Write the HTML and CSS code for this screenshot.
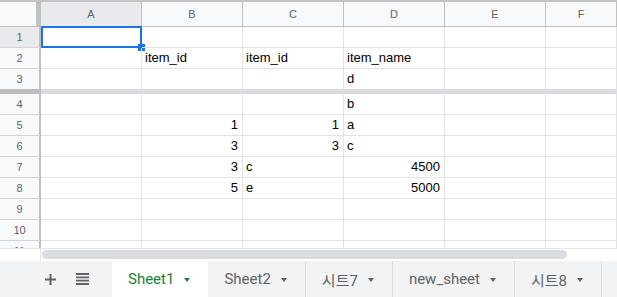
FILE: index.html
```html
<!doctype html>
<html>
<head>
    <meta charset="utf-8" />
    <title>Sheet</title>
    <link rel="stylesheet" href="styles.css">
</head>
<body>

<div class="grid">
    <div class="row head">
        <div class="corner"></div>
        <div class="col sel">A</div>
        <div class="col">B</div>
        <div class="col">C</div>
        <div class="col">D</div>
        <div class="col">E</div>
        <div class="col">F</div>
    </div>
    <div class="row">
        <div class="rh sel">1</div>
        <div class="cell active"><span class="selection"><span class="handle"></span></span></div>
        <div class="cell"></div><div class="cell"></div><div class="cell"></div><div class="cell"></div><div class="cell"></div>
    </div>
    <div class="row">
        <div class="rh">2</div>
        <div class="cell"></div>
        <div class="cell">item_id</div>
        <div class="cell">item_id</div>
        <div class="cell">item_name</div>
        <div class="cell"></div><div class="cell"></div>
    </div>
    <div class="row frozen">
        <div class="rh">3</div>
        <div class="cell"></div><div class="cell"></div><div class="cell"></div>
        <div class="cell">d</div>
        <div class="cell"></div><div class="cell"></div>
    </div>
    <div class="row">
        <div class="rh">4</div>
        <div class="cell"></div><div class="cell"></div><div class="cell"></div>
        <div class="cell">b</div>
        <div class="cell"></div><div class="cell"></div>
    </div>
    <div class="row">
        <div class="rh">5</div>
        <div class="cell"></div>
        <div class="cell num">1</div>
        <div class="cell num">1</div>
        <div class="cell">a</div>
        <div class="cell"></div><div class="cell"></div>
    </div>
    <div class="row">
        <div class="rh">6</div>
        <div class="cell"></div>
        <div class="cell num">3</div>
        <div class="cell num">3</div>
        <div class="cell">c</div>
        <div class="cell"></div><div class="cell"></div>
    </div>
    <div class="row">
        <div class="rh">7</div>
        <div class="cell"></div>
        <div class="cell num">3</div>
        <div class="cell">c</div>
        <div class="cell num">4500</div>
        <div class="cell"></div><div class="cell"></div>
    </div>
    <div class="row">
        <div class="rh">8</div>
        <div class="cell"></div>
        <div class="cell num">5</div>
        <div class="cell">e</div>
        <div class="cell num">5000</div>
        <div class="cell"></div><div class="cell"></div>
    </div>
    <div class="row">
        <div class="rh">9</div>
        <div class="cell"></div><div class="cell"></div><div class="cell"></div><div class="cell"></div><div class="cell"></div><div class="cell"></div>
    </div>
    <div class="row">
        <div class="rh">10</div>
        <div class="cell"></div><div class="cell"></div><div class="cell"></div><div class="cell"></div><div class="cell"></div><div class="cell"></div>
    </div>
    <div class="row">
        <div class="rh">11</div>
        <div class="cell"></div><div class="cell"></div><div class="cell"></div><div class="cell"></div><div class="cell"></div><div class="cell"></div>
    </div>
</div>

<div class="hscroll">
    <div class="hscroll-gap"></div>
    <div class="thumb"></div>
</div>

<div class="tabbar">
    <div class="tools">
        <svg width="11" height="11" viewBox="0 0 11 11"><path d="M5.5 0v11M0 5.5h11" stroke="#5f6368" stroke-width="2"/></svg>
        <svg width="13" height="12" viewBox="0 0 13 12"><path d="M0 1h13M0 4.3h13M0 7.7h13M0 11h13" stroke="#5f6368" stroke-width="1.8"/></svg>
    </div>
    <div class="tab current">Sheet1<span class="caret"></span></div>
    <div class="tab">Sheet2<span class="caret"></span></div>
    <div class="tab">시트7<span class="caret"></span></div>
    <div class="tab">new_sheet<span class="caret"></span></div>
    <div class="tab">시트8<span class="caret"></span></div>
</div>

</body>
</html>
```

FILE: styles.css
```css
body{
    margin:0;
    width:617px;
    height:297px;
    overflow:hidden;
    background:#fff;
    font-family:"Liberation Sans", Arial, sans-serif;
}

.grid{
    height:246px;
    overflow:hidden;
    border-top:2px solid #c4c4c4;
}

.row{
    display:grid;
    grid-template-columns: 41px repeat(5, 101px) 1fr;
    height:21px;
}

.cell{
    position:relative;
    box-sizing:border-box;
    border-right:1px solid #e2e3e3;
    border-bottom:1px solid #e2e3e3;
    padding:0 3px;
    font-size:13px;
    line-height:20px;
    color:#000;
    white-space:nowrap;
}

.num{
    text-align:right;
    padding-right:4px;
}

.rh{
    box-sizing:border-box;
    background:#f8f9fa;
    border-right:2px solid #c0c0c0;
    border-bottom:1px solid #d4d4d4;
    text-align:center;
    font-size:11px;
    line-height:20px;
    color:#5f6368;
}

/* column header */
.head{
    height:25px;
    background:#f8f9fa;
}

.corner{
    border-right:5px solid #c0c0c0;
    border-bottom:1px solid #c0c0c0;
}

.col{
    box-sizing:border-box;
    border-right:1px solid #c0c0c0;
    border-bottom:1px solid #c0c0c0;
    text-align:center;
    font-size:11px;
    line-height:24px;
    color:#5f6368;
}

.sel{
    background:#e8eaed;
}

/* frozen divider under row 3 */
.frozen{
    height:25px;
}
.frozen .cell{
    border-bottom:5px solid #dadce0;
}
.frozen .rh{
    border-bottom:5px solid #bdbdbd;
}

/* selected cell */
.selection{
    position:absolute;
    left:0;
    top:-1px;
    right:-1px;
    bottom:-1px;
    border:2px solid #1a73e8;
}
.handle{
    position:absolute;
    right:-5px;
    bottom:-5px;
    width:7px;
    height:7px;
    background:#1a73e8;
}

/* horizontal scrollbar */
.hscroll{
    display:flex;
    height:12px;
    border-top:1px solid #e2e3e3;
}
.hscroll-gap{
    width:40px;
    border-right:1px solid #e2e3e3;
}
.thumb{
    width:525px;
    height:9px;
    margin:1px 0 0 1px;
    border-radius:5px;
    background:#dadce0;
}

/* sheet tabs */
.tabbar{
    display:flex;
    height:36px;
    background:#f1f3f4;
}

.tools{
    box-sizing:border-box;
    width:112px;
    display:flex;
    align-items:center;
    gap:20px;
    padding-left:45px;
}

.tab{
    display:flex;
    align-items:center;
    gap:10px;
    padding:0 18px 0 16px;
    border-right:1px solid #dadce0;
    font-family:Roboto, "Noto Sans CJK KR", sans-serif;
    font-size:15px;
    color:#5f6368;
}

.tab.current{
    background:#fff;
    color:#188038;
    border-right:none;
}

.caret{
    width:0;
    height:0;
    margin-top:2px;
    border-left:3.5px solid transparent;
    border-right:3.5px solid transparent;
    border-top:4px solid currentColor;
}
```
